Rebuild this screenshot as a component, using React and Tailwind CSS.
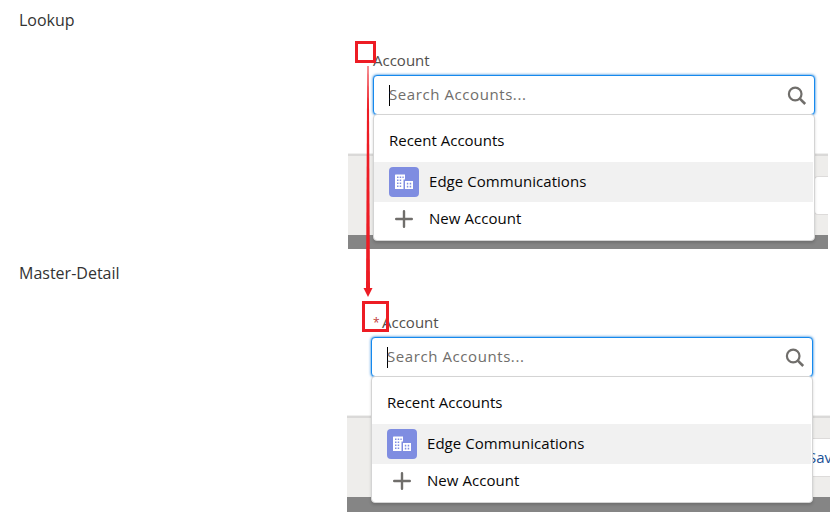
import React from "react";

const SANS = "font-['Open_Sans','Noto_Sans',sans-serif] font-normal";

function SearchIcon() {
  return (
    <svg className="h-5 w-5 shrink-0" viewBox="0 0 20 20" fill="none" stroke="#706e6b">
      <circle cx="8.2" cy="9" r="6.3" strokeWidth="2.2" />
      <path d="M12.8 13.6 L18.2 19" strokeWidth="2.6" />
    </svg>
  );
}

function AccountIcon() {
  return (
    <svg className="h-[30px] w-[30px] shrink-0 rounded bg-[#7f8de1]" viewBox="0 0 30 30">
      <path
        fill="#fff"
        fillRule="evenodd"
        d="M6.500 7.500H16v5H14.500v9.500H6V8zM8 9.500v1.500h1.500v-1.500zM10.700 9.500v1.500h1.500v-1.500zM13.400 9.500v1.500h1.300v-1.500zM8 12.500v1.500h1.500v-1.500zM10.700 12.500v1.500h1.500v-1.500zM8 15.500v1.500h1.500v-1.500zM10.700 15.500v1.500h1.500v-1.500zM8 18.500v1.500h1.500v-1.500zM10.700 18.500v1.500h1.500v-1.500zM16 14h8v8H16zM17.800 15.800v1.700h1.500v-1.700zM20.700 15.800v1.700h1.500v-1.700zM17.800 18.700v1.700h1.500v-1.700zM20.700 18.700v1.700h1.500v-1.700z"
      />
    </svg>
  );
}

function PlusIcon() {
  return (
    <svg className="h-[18px] w-[18px] shrink-0" viewBox="0 0 18 18" stroke="#706e6b" strokeWidth="2.4" strokeLinecap="round">
      <path d="M9 1.200V16.800M1.200 9H16.800" />
    </svg>
  );
}

function Menu() {
  return (
    <div className="absolute inset-x-0 top-[39px] z-10 h-[127px] rounded border border-[#d4d4d4] bg-white text-[15px] text-[#080707] shadow-[0_2px_3px_rgba(0,0,0,0.16)]">
      <div className="flex h-[47px] items-center pt-[3px] pl-[15px]">
        <span>Recent Accounts</span>
      </div>
      <div className="mr-px flex h-10 items-center gap-[10px] bg-[#f1f1f1] pl-[15px]">
        <AccountIcon />
        <span className="pb-[2px] tracking-[0.05px]">Edge Communications</span>
      </div>
      <div className="flex h-[33px] items-center gap-4 pl-[21px]">
        <PlusIcon />
        <span className="tracking-[0.05px]">New Account</span>
      </div>
    </div>
  );
}

function LookupField() {
  return (
    <div className="relative h-10 w-[442px]">
      <div className="flex h-10 items-center justify-between rounded border border-[#1589ee] bg-white pr-[7px] pl-[15px] shadow-[0_0_3px_#0070d2]">
        <div className="flex items-center">
          <span className="h-[21px] w-px bg-black" />
          <span className="-ml-px pb-[2px] text-[15px] tracking-[0.58px] text-[#706e6b]">Search Accounts...</span>
        </div>
        <SearchIcon />
      </div>
      <Menu />
    </div>
  );
}

function Footer({ children }) {
  return (
    <div className="flex h-[82px] flex-col bg-[#eeedeb]">
      <div className="h-px bg-[#efefee]" />
      <div className="h-[2px] bg-[#dad9d8]" />
      <div className="flex flex-1 items-center justify-end">{children}</div>
    </div>
  );
}

export default function App() {
  return (
    <main className="relative h-[514px] w-[835px] overflow-hidden bg-white">
      <section className="flex h-[253px]">
        <h2 className="w-[348px] pt-2 pl-[19px] font-['Open_Sans',sans-serif] text-[16px] leading-6 text-[#333]">Lookup</h2>
        <div className={`flex h-[249px] w-[480px] flex-col overflow-hidden ${SANS}`}>
          <div className="h-[153px] pt-[46px] pl-[25px]">
            <div className="h-[29px] text-[15px] leading-[29px] text-[#514f4d]">Account</div>
            <LookupField />
          </div>
          <Footer>
            <div className="h-[39px] w-[14px] rounded-l border border-r-0 border-[#dddbda] bg-white" />
          </Footer>
          <div className="h-[14px] bg-[#858585]" />
        </div>
      </section>

      <section className="flex h-[259px]">
        <h2 className="w-[347px] pt-2 pl-[19px] font-['Open_Sans',sans-serif] text-[16px] leading-6 text-[#333]">Master-Detail</h2>
        <div className={`flex h-[259px] w-[483px] flex-col overflow-hidden ${SANS}`}>
          <div className="h-[162px] pt-[55px] pl-[24px]">
            <div className="flex h-[29px] gap-[3px] pl-[2px] text-[15px] leading-[29px] text-[#514f4d]">
              <span className="w-[6px] text-[12px] text-[#c23934]">*</span>
              <span>Account</span>
            </div>
            <LookupField />
          </div>
          <Footer>
            <div className="flex h-[39px] w-[24px] items-center overflow-hidden border-y border-[#dddbda] bg-white pl-[2px] text-[15px] text-[#1b5297]">
              Save
            </div>
          </Footer>
          <div className="h-[15px] bg-[#858585]" />
        </div>
      </section>

      {/* Callouts drawn over both examples */}
      <div className="absolute top-[41px] left-[355px] z-20 h-[22px] w-[21px] border-3 border-[#ed1c24]" />
      <div className="absolute top-[301px] left-[362px] z-20 h-[31px] w-[27px] border-3 border-[#ed1c24]" />
      <svg className="absolute top-[66px] left-[363px] z-20 h-[231px] w-[10px]" viewBox="0 0 10 231">
        <defs>
          <linearGradient id="shaft" x1="0" y1="0" x2="0" y2="1">
            <stop offset="0" stopColor="#f4777c" />
            <stop offset="0.2" stopColor="#ed1c24" />
          </linearGradient>
        </defs>
        <path fill="url(#shaft)" d="M4.200 0H5.800L7 222H3z" />
        <path fill="#ed1c24" d="M0.500 222H9.500L5 231z" />
      </svg>
    </main>
  );
}
